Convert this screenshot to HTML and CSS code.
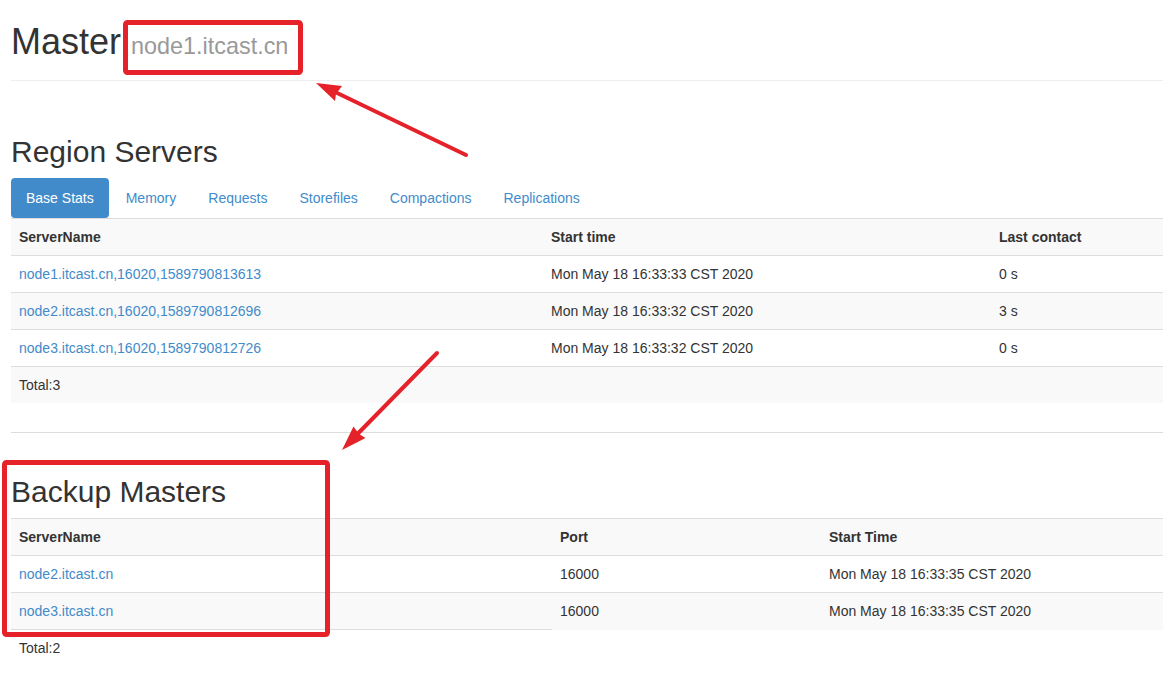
FILE: index.html
```html
<!DOCTYPE html>
<html lang="en">
<head>
<meta charset="utf-8">
<title>Master: node1.itcast.cn</title>
<link rel="stylesheet" href="styles.css">
</head>
<body>
<div class="page">
  <div class="container">
    <div class="page-header">
      <h1>Master <small>node1.itcast.cn</small></h1>
    </div>

    <section class="region-servers">
      <h2>Region Servers</h2>
      <ul class="nav-pills">
        <li class="active"><a href="#">Base Stats</a></li>
        <li><a href="#">Memory</a></li>
        <li><a href="#">Requests</a></li>
        <li><a href="#">Storefiles</a></li>
        <li><a href="#">Compactions</a></li>
        <li><a href="#">Replications</a></li>
      </ul>
      <table class="table rs-table">
        <colgroup><col class="rs-c1"><col class="rs-c2"><col></colgroup>
        <tbody>
          <tr><th>ServerName</th><th>Start time</th><th>Last contact</th></tr>
          <tr><td><a href="#">node1.itcast.cn,16020,1589790813613</a></td><td>Mon May 18 16:33:33 CST 2020</td><td>0 s</td></tr>
          <tr><td><a href="#">node2.itcast.cn,16020,1589790812696</a></td><td>Mon May 18 16:33:32 CST 2020</td><td>3 s</td></tr>
          <tr><td><a href="#">node3.itcast.cn,16020,1589790812726</a></td><td>Mon May 18 16:33:32 CST 2020</td><td>0 s</td></tr>
          <tr><td>Total:3</td><td></td><td></td></tr>
        </tbody>
      </table>
      <div class="divider"></div>
    </section>

    <section class="backup-masters">
      <h2>Backup Masters</h2>
      <table class="table bm-table">
        <colgroup><col class="bm-c1"><col class="bm-c2"><col></colgroup>
        <tbody>
          <tr><th>ServerName</th><th>Port</th><th>Start Time</th></tr>
          <tr><td><a href="#">node2.itcast.cn</a></td><td>16000</td><td>Mon May 18 16:33:35 CST 2020</td></tr>
          <tr><td><a href="#">node3.itcast.cn</a></td><td>16000</td><td>Mon May 18 16:33:35 CST 2020</td></tr>
          <tr><td>Total:2</td></tr>
        </tbody>
      </table>
    </section>
  </div>

  <svg class="annotations" width="1163" height="677" viewBox="0 0 1163 677" aria-hidden="true">
    <rect x="125.5" y="22.5" width="175" height="50" rx="2" fill="none" stroke="#e52129" stroke-width="5"/>
    <rect x="4.5" y="462.5" width="323" height="172" rx="2" fill="none" stroke="#e52129" stroke-width="5"/>
    <line x1="466" y1="155" x2="334" y2="91.5" stroke="#e52129" stroke-width="4" stroke-linecap="round"/>
    <polygon points="316,83 342,86 336,94 335,101" fill="#e52129"/>
    <line x1="437" y1="353" x2="356" y2="435.5" stroke="#e52129" stroke-width="4" stroke-linecap="round"/>
    <polygon points="342,450 353.5,426.5 359,434 365.5,438" fill="#e52129"/>
  </svg>
</div>
</body>
</html>
```

FILE: styles.css
```css
html, body {
  margin: 0;
  padding: 0;
  background: #fff;
}

body {
  font-family: "Liberation Sans", Arial, Helvetica, sans-serif;
  font-size: 14px;
  line-height: 20px;
  color: #333;
  overflow: hidden;
}

.page {
  position: relative;
  width: 1163px;
  height: 677px;
  overflow: hidden;
}

.container {
  padding-left: 11px;
}

a {
  color: #428bca;
  text-decoration: none;
}

.page-header {
  padding-bottom: 9px;
  border-bottom: 1px solid #eee;
}

h1 {
  margin: 22px 0 9px;
  font-size: 36px;
  line-height: 40px;
  font-weight: 500;
}

h1 small {
  font-size: 65%;
  line-height: 1;
  font-weight: normal;
  color: #999;
}

h2 {
  font-size: 30px;
  line-height: 33px;
  font-weight: 500;
  margin: 0 0 10px;
}

.region-servers h2 {
  margin-top: 54px;
}

.backup-masters h2 {
  margin-top: 42px;
}

.nav-pills {
  list-style: none;
  margin: 0;
  padding: 0;
  display: flex;
}

.nav-pills li + li {
  margin-left: 2px;
}

.nav-pills a {
  display: block;
  padding: 10px 15px;
  border-radius: 4px;
}

.nav-pills li.active a {
  background: #428bca;
  color: #fff;
}

.table {
  width: 1152px;
  border-collapse: collapse;
  border-spacing: 0;
  table-layout: fixed;
}

.table th,
.table td {
  padding: 8px;
  line-height: 20px;
  text-align: left;
  vertical-align: top;
  border-top: 1px solid #ddd;
  white-space: nowrap;
}

.table th {
  font-weight: bold;
}

.table tr:nth-of-type(odd) > th,
.table tr:nth-of-type(odd) > td {
  background: #f9f9f9;
}

.rs-c1 { width: 532px; }
.rs-c2 { width: 448px; }
.bm-c1 { width: 541px; }
.bm-c2 { width: 269px; }

.divider {
  margin-top: 29px;
  border-top: 1px solid #ddd;
}

.annotations {
  position: absolute;
  left: 0;
  top: 0;
  pointer-events: none;
}
```
